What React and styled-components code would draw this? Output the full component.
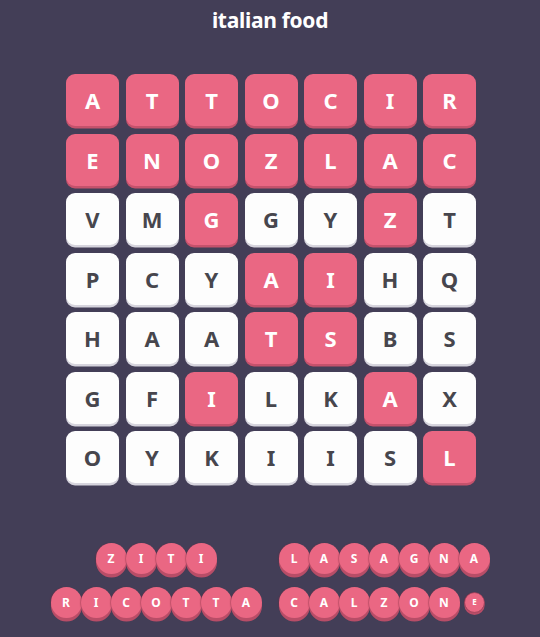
import React from "react";
import styled, { createGlobalStyle } from "styled-components";

const Global = createGlobalStyle`
  html, body {
    margin: 0;
    padding: 0;
    background: #433e57;
  }
  body {
    font-family: "Noto Sans", "Open Sans", sans-serif;
  }
`;

const Page = styled.div`
  width: 540px;
  height: 637px;
  background: #433e57;
  display: flex;
  flex-direction: column;
  align-items: center;
  overflow: hidden;
`;

const Title = styled.h1`
  margin: 7px 0 0;
  font-size: 21px;
  line-height: 26px;
  font-weight: 700;
  color: #ffffff;
  letter-spacing: -0.3px;
`;

const Board = styled.div`
  margin-top: 41px;
  margin-left: 2px;
  display: grid;
  grid-template-columns: repeat(7, 53px);
  grid-auto-rows: 52px;
  column-gap: 6.5px;
  row-gap: 7.5px;
`;

const Tile = styled.div`
  border-radius: 9px;
  display: flex;
  align-items: center;
  justify-content: center;
  font-size: 22px;
  font-weight: 700;
  background: ${(p) => (p.$found ? "#ea6783" : "#fdfdfd")};
  color: ${(p) => (p.$found ? "#ffffff" : "#47464d")};
  box-shadow: 0 2.5px 0 ${(p) => (p.$found ? "#c5526c" : "#d6d4dd")};
`;

const WordArea = styled.div`
  margin-top: 60px;
  width: 456px;
  display: grid;
  grid-template-columns: 1fr 1fr;
  row-gap: 13px;
`;

const Word = styled.div`
  display: flex;
  justify-content: center;
`;

const Bubble = styled.div`
  width: 31px;
  height: 31px;
  border-radius: 50%;
  margin-left: ${(p) => (p.$first ? "0" : "-1px")};
  background: #ea6783;
  box-shadow: 0 3.5px 0 #b84d67, -1px 0 1px rgba(120, 40, 60, 0.35);
  color: #ffffff;
  font-size: 12px;
  font-weight: 700;
  display: flex;
  align-items: center;
  justify-content: center;
  transform: ${(p) => (p.$small ? "scale(0.66)" : "none")};
  border: ${(p) => (p.$small ? "1.5px solid #8f3a52" : "none")};
  box-sizing: border-box;
`;

const grid = [
  ["ATTOCIR", "1111111"],
  ["ENOZLAC", "1111111"],
  ["VMGGYZT", "0010010"],
  ["PCYAIHQ", "0001100"],
  ["HAATSBS", "0001100"],
  ["GFILKAX", "0010010"],
  ["OYKIISL", "0000001"],
];

const words = [
  { text: "ZITI" },
  { text: "LASAGNA" },
  { text: "RICOTTA" },
  { text: "CALZONE", small: 6 },
];

export default function App() {
  return (
    <Page>
      <Global />
      <Title>italian food</Title>
      <Board>
        {grid.flatMap(([letters, marks], r) =>
          letters.split("").map((ch, c) => (
            <Tile key={`${r}-${c}`} $found={marks[c] === "1"}>
              {ch}
            </Tile>
          ))
        )}
      </Board>
      <WordArea>
        {words.map((w) => (
          <Word key={w.text}>
            {w.text.split("").map((ch, i) => (
              <Bubble key={i} $first={i === 0} $small={w.small === i}>
                {ch}
              </Bubble>
            ))}
          </Word>
        ))}
      </WordArea>
    </Page>
  );
}
